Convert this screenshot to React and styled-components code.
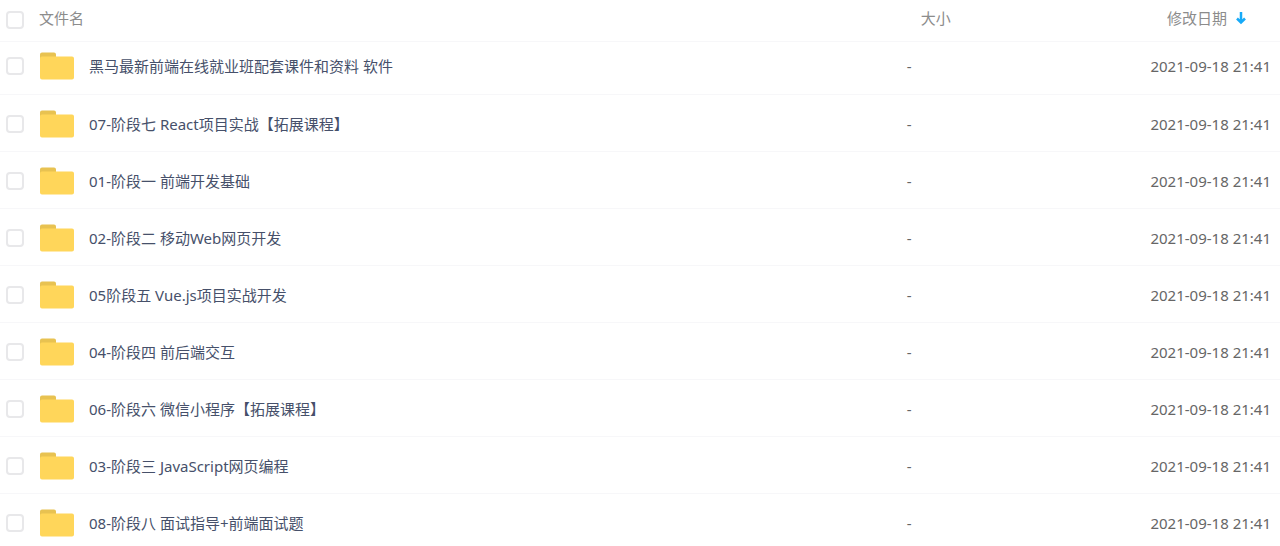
import React, { useState } from 'react';
import styled, { createGlobalStyle } from 'styled-components';

const files = [
  { id: 1, name: '黑马最新前端在线就业班配套课件和资料 软件', date: '2021-09-18 21:41' },
  { id: 2, name: '07-阶段七 React项目实战【拓展课程】', date: '2021-09-18 21:41' },
  { id: 3, name: '01-阶段一 前端开发基础', date: '2021-09-18 21:41' },
  { id: 4, name: '02-阶段二 移动Web网页开发', date: '2021-09-18 21:41' },
  { id: 5, name: '05阶段五 Vue.js项目实战开发', date: '2021-09-18 21:41' },
  { id: 6, name: '04-阶段四 前后端交互', date: '2021-09-18 21:41' },
  { id: 7, name: '06-阶段六 微信小程序【拓展课程】', date: '2021-09-18 21:41' },
  { id: 8, name: '03-阶段三 JavaScript网页编程', date: '2021-09-18 21:41' },
  { id: 9, name: '08-阶段八 面试指导+前端面试题', date: '2021-09-18 21:41' },
];

const FolderIcon = () => (
  <Folder viewBox='0 0 34 28' aria-hidden='true'>
    <path d='M0 8V2.500a2 2 0 0 1 2-2h12a2 2 0 0 1 2 2V8z' fill='#e8c251' />
    <path
      d='M0 6.500a2 2 0 0 1 2-2h30a2 2 0 0 1 2 2v19a2 2 0 0 1-2 2H2a2 2 0 0 1-2-2z'
      fill='#ffd65a'
    />
  </Folder>
);

const App = () => {
  const [selected, setSelected] = useState([]);
  const allSelected = selected.length === files.length;

  const toggleAll = () => setSelected(allSelected ? [] : files.map((f) => f.id));

  const toggle = (id) =>
    setSelected((prev) =>
      prev.includes(id) ? prev.filter((item) => item !== id) : [...prev, id]
    );

  return (
    <>
      <GlobalStyle />
      <Table>
        <thead>
          <HeadRow>
            <CheckHead>
              <Checkbox id='all' checked={allSelected} onChange={toggleAll} />
            </CheckHead>
            <Head>
              <label htmlFor='all'>文件名</label>
            </Head>
            <SizeHead>大小</SizeHead>
            <DateHead>
              <SortButton type='button'>
                修改日期
                <SortArrow viewBox='0 0 12 14' aria-hidden='true'>
                  <path d='M6 1v11M2 7.500L6 11.500l4-4' />
                </SortArrow>
              </SortButton>
            </DateHead>
          </HeadRow>
        </thead>

        <tbody>
          {files.map((file) => (
            <Row key={file.id}>
              <Cell>
                <Checkbox
                  id={`file-${file.id}`}
                  checked={selected.includes(file.id)}
                  onChange={() => toggle(file.id)}
                />
              </Cell>
              <Cell>
                <FileName htmlFor={`file-${file.id}`}>
                  <FolderIcon />
                  {file.name}
                </FileName>
              </Cell>
              <SizeCell>-</SizeCell>
              <DateCell>{file.date}</DateCell>
            </Row>
          ))}
        </tbody>
      </Table>
    </>
  );
};

export default App;

const GlobalStyle = createGlobalStyle`
  * {
    box-sizing: border-box;
  }
  body {
    margin: 0;
    background-color: #fff;
    font-family: 'Noto Sans', 'Noto Sans CJK SC', sans-serif;
    font-size: 15px;
    line-height: 20px;
  }
`;

const Table = styled.table`
  width: 100%;
  table-layout: fixed;
  border-collapse: separate;
  border-spacing: 0;
`;

// header
const HeadRow = styled.tr`
  height: 42px;
`;

const Head = styled.th`
  padding: 0 0 5px;
  border-bottom: 1px solid #f7f7f9;
  color: #8c8c8c;
  font-weight: 400;
  text-align: left;
  white-space: nowrap;
`;

const CheckHead = styled(Head)`
  width: 39px;
  padding: 0 0 1px;
`;

const SizeHead = styled(Head)`
  width: 19%;
  padding-left: 16px;
`;

const DateHead = styled(Head)`
  width: 132px;
  padding-left: 19px;
`;

const SortButton = styled.button`
  display: flex;
  align-items: center;
  gap: 8px;
  padding: 0;
  border: none;
  background: none;
  color: inherit;
  font: inherit;
  cursor: pointer;
`;

const SortArrow = styled.svg`
  width: 12px;
  height: 14px;
  fill: none;
  stroke: #17aaf8;
  stroke-width: 2.5;
`;

// rows
const Cell = styled.td`
  padding: 2px 0 0;
  border-bottom: 1px solid #f7f7f9;
  color: #666;
  white-space: nowrap;
`;

const SizeCell = styled(Cell)`
  padding-left: 2px;
`;

const DateCell = styled(Cell)`
  padding-right: 9px;
  text-align: right;
`;

const Row = styled.tr`
  height: 57px;
  &:first-child {
    height: 53px;
  }
  &:first-child ${Cell} {
    padding-top: 0;
    padding-bottom: 4px;
  }
`;

const FileName = styled.label`
  display: flex;
  align-items: center;
  gap: 15px;
  padding-left: 1px;
  color: #46506a;
`;

const Folder = styled.svg`
  width: 34px;
  height: 28px;
  flex-shrink: 0;
`;

const Checkbox = styled.input.attrs({ type: 'checkbox' })`
  appearance: none;
  display: block;
  width: 18px;
  height: 18px;
  margin: 0 0 0 6px;
  border: 2px solid #e8e8ea;
  border-radius: 4px;
  background-color: #fff;
  &:checked {
    border-color: #06a7ff;
    background-color: #06a7ff;
  }
`;
